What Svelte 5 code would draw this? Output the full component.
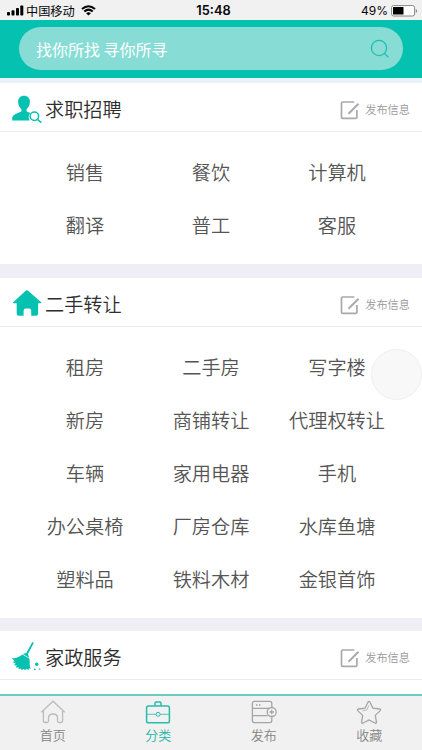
<script>
  let keyword = '';
  let activeTab = 'category';

  const sections = [
    {
      icon: 'person',
      title: '求职招聘',
      items: ['销售', '餐饮', '计算机', '翻译', '普工', '客服']
    },
    {
      icon: 'house',
      title: '二手转让',
      items: [
        '租房', '二手房', '写字楼',
        '新房', '商铺转让', '代理权转让',
        '车辆', '家用电器', '手机',
        '办公桌椅', '厂房仓库', '水库鱼塘',
        '塑料品', '铁料木材', '金银首饰'
      ]
    },
    { icon: 'broom', title: '家政服务', items: [] }
  ];

  const tabs = [
    { id: 'home', label: '首页' },
    { id: 'category', label: '分类' },
    { id: 'publish', label: '发布' },
    { id: 'favorite', label: '收藏' }
  ];
</script>

<div class="screen">
  <div class="status">
    <div class="carrier">
      <svg class="signal" width="17" height="11" viewBox="0 0 17 11">
        <rect x="0" y="7" width="3" height="3.5" rx="0.8" />
        <rect x="4.5" y="5.2" width="3" height="5.3" rx="0.8" />
        <rect x="9" y="3" width="3" height="7.5" rx="0.8" />
        <rect x="13.3" y="0.5" width="3" height="10" rx="0.8" />
      </svg>
      <span>中国移动</span>
      <svg class="wifi" width="15" height="11" viewBox="0 0 15 11">
        <path d="M1 4.1Q7.5 -1.7 14 4.1" />
        <path d="M3.3 6.5Q7.5 2.8 11.7 6.5" />
        <path class="dot" d="M5.1 8.2Q7.5 6.3 9.9 8.2L7.5 10.6z" />
      </svg>
    </div>
    <span class="time">15:48</span>
    <div class="power">
      <span>49%</span>
      <svg width="27" height="12" viewBox="0 0 27 12">
        <rect x="0.6" y="0.6" width="23" height="10.4" rx="2" fill="#fff" stroke="#858585" />
        <rect x="2" y="2" width="10.5" height="7.6" rx="0.6" />
        <path d="M24.8 4v4q1.3-.6 1.3-2t-1.3-2z" fill="#858585" />
      </svg>
    </div>
  </div>

  <header>
    <label class="search">
      <input type="text" placeholder="找你所找 寻你所寻" bind:value={keyword} />
      <svg width="20" height="20" viewBox="0 0 20 20" fill="none" stroke="#1fbfae" stroke-width="1.3">
        <circle cx="9" cy="9" r="7.6" />
        <path d="M14.2 14.2L18.6 18.4" />
      </svg>
    </label>
  </header>

  <main>
    {#each sections as section}
      <section>
        <div class="section-head">
          <svg class="section-icon" width="32" height="32" viewBox="0 0 32 32">
            {#if section.icon === 'person'}
              <path d="M13 2.8C9.2 2.8 7.1 5.3 7.1 8.700c0 3.400 1.300 5.800 3.300 7.300v2.500c-2.800 1.600-8.400 2.500-9.200 6.200v2.900h17.400c-1.500-2.700-1.100-5.700.8-7.500l-3.800-1.700v-2.400c2-1.500 3.300-3.900 3.300-7.300 0-3.400-2.100-5.900-5.900-5.900z" />
              <circle cx="23.400" cy="23.300" r="4.200" class="line" />
              <path d="M26.400 26.400L30.400 29.600" class="line" />
            {:else if section.icon === 'house'}
              <path d="M15.9 2.3q.6 0 1.2.5L30.200 14.200q.7 1-.6 1.100h-2.500v10.500q0 2-2 2h-4.900v-5q0-2.400-2-2.400h-3.600q-2 0-2 2.400v5H7.700q-2 0-2-2V15.300H3q-1.800 0-.8-1.100L14.700 2.800q.6-.5 1.200-.5z" />
            {:else}
              <path d="M20.900 1.700c.8-1 2.200-.3 1.600.9l-5.500 10.300 1.200 3.800-6.400-3.600 3.500-1.200z" />
              <path d="M11.300 13.600l7 3.900c1 3.100-.4 6.600 1.500 10.300l-2-.5.100 1.800-2.500-1-1.300 1-1.600-1-1.800 1.200-.8-1.700-2.500.7.500-1.900-3.200.2 1.200-2-3.100-.3 2-1.700-3.500-1.600 2.500-.7-3.200-3.400c4.700 1.200 7.300-.8 10.700-3.300z" />
              <circle cx="25.700" cy="23.200" r="1.700" />
              <circle cx="23.800" cy="28.300" r=".9" />
              <circle cx="28.700" cy="28.300" r=".7" />
            {/if}
          </svg>
          <h2>{section.title}</h2>
          <button class="post">
            <svg width="20" height="20" viewBox="0 0 20 20" fill="none" stroke="#a9a9a9" stroke-width="1.7">
              <path d="M14.300 2H2.700Q1.500 2 1.500 3.200v14Q1.500 18.400 2.700 18.400h13Q16.900 18.400 16.900 17.200V10" />
              <path d="M8.500 13.800L18.500 3.800" stroke-width="2" />
            </svg>
            <span>发布信息</span>
          </button>
        </div>
        {#if section.items.length > 0}
          <div class="grid">
            {#each section.items as item}
              <span>{item}</span>
            {/each}
          </div>
        {/if}
      </section>
    {/each}
  </main>

  <nav>
    {#each tabs as tab}
      <button class="tab" class:active={activeTab === tab.id} on:click={() => (activeTab = tab.id)}>
        <svg width="26" height="24" viewBox="0 0 26 24">
          {#if tab.id === 'home'}
            <path d="M1.300 12.300L13 1.200l11.700 11.100M3.400 11v9.500Q3.400 22.500 5.200 22.500h1.800Q8.500 22.500 8.500 21V18q0-4 4.500-4t4.500 4v3q0 1.500 1.500 1.500h1.800q1.800 0 1.800-2V11" stroke="#bcbcbc" />
          {:else if tab.id === 'category'}
            <rect x="1.600" y="6" width="22.800" height="16.700" rx="1.800" />
            <path d="M10 5.800V3.200Q10 2 11.200 2h3.600Q16 2 16 3.200v2.600" />
            <path d="M2 14.300h9M15.200 14.300H24" stroke-width=".8" />
            <circle cx="13.100" cy="14.300" r="2" stroke-width="1" />
          {:else if tab.id === 'publish'}
            <path d="M20.800 7.500V3.400Q20.800 1.400 18.800 1.400H3.400Q1.400 1.400 1.400 3.400v17.200q0 2 2 2h15.400q2 0 2-2v-3.400M1.400 8.300h17M1.400 15.600h15.200" />
            <circle cx="20.700" cy="12" r="4.500" />
            <path d="M18.400 12h4.600M20.700 9.700v4.600M5 5h1.500M8 5h1.500" />
          {:else}
            <path d="M12 2.200q1-1.700 2 0l2.900 5.900 6.500.9q2 .4.600 1.900l-4.700 4.500 1.100 6.500q.2 1.900-1.500 1.100L13 20l-5.900 3q-1.700.8-1.500-1.100l1.100-6.500L2 10.900Q.6 9.400 2.600 9l6.500-.9z" />
            <path d="M13 5.200l-2 4.600-4.500 1" stroke-width=".7" />
          {/if}
        </svg>
        <span>{tab.label}</span>
      </button>
    {/each}
  </nav>

  <div class="assistive"></div>
</div>

<style>
:global(body) {
  margin: 0;
  overflow: hidden;
}
.screen {
  position: relative;
  display: flex;
  flex-direction: column;
  width: 422px;
  height: 750px;
  overflow: hidden;
  background: #efeef4;
  font-family: "Noto Sans CJK SC", sans-serif;
  font-weight: 350;
}
button {
  padding: 0;
  border: none;
  background: none;
  font-family: inherit;
  font-weight: inherit;
}
.status {
  flex: none;
  display: grid;
  grid-template-columns: 1fr auto 1fr;
  align-items: center;
  height: 20px;
  padding: 0 4px 0 7px;
  background: #f1f1f1;
  color: #050505;
  font-size: 12.2px;
  font-weight: 400;
  line-height: 20px;
}
.carrier {
  display: flex;
  align-items: center;
}
.carrier span {
  margin: 0 6px 0 2px;
}
.wifi path {
  fill: none;
  stroke: #050505;
  stroke-width: 2;
}
.wifi .dot {
  fill: #050505;
  stroke: none;
}
.time {
  font: 600 12.8px/20px Inter, sans-serif;
  padding: 1px 0 0 2px;
}
.power {
  display: flex;
  justify-content: flex-end;
  align-items: center;
  gap: 3px;
  font: 12px/20px Inter, sans-serif;
}
.power span {
  padding-top: 1px;
}
header {
  flex: none;
  height: 58px;
  padding: 7px 19px 8px;
  background: #04c1b0;
  box-sizing: border-box;
}
.search {
  display: flex;
  align-items: center;
  height: 43px;
  padding: 0 13px 0 17px;
  border-radius: 22px;
  background: #87ddd5;
  box-sizing: border-box;
}
.search svg {
  margin-top: 1px;
}
input {
  flex: 1;
  min-width: 0;
  padding: 0;
  border: none;
  outline: none;
  background: none;
  color: #fff;
  font: 400 16px/24px "Noto Sans CJK SC", sans-serif;
}
input::placeholder {
  color: #fff;
  opacity: 1;
}
main {
  flex: 1;
  min-height: 0;
  display: flex;
  flex-direction: column;
  gap: 13.5px;
  padding-top: 5px;
  overflow: hidden;
  background: linear-gradient(#e9f2f6 5px, #efeef4 5px);
}
section {
  flex: none;
  background: #fff;
}
section:last-child {
  flex: 1;
}
.section-head {
  display: flex;
  align-items: center;
  height: 49px;
  padding: 0 12px 0 11px;
  border-bottom: 1px solid #ececec;
  box-sizing: border-box;
}
.section-icon {
  margin-top: 4px;
  fill: #04c1b0;
}
.section-icon .line {
  fill: none;
  stroke: #04c1b0;
  stroke-width: 1.5;
}
h2 {
  flex: 1;
  margin: 4px 0 0 2px;
  color: #2e2e2e;
  font-size: 19.2px;
  font-weight: inherit;
  line-height: 28px;
}
.post {
  display: flex;
  align-items: center;
  gap: 5px;
  margin-top: 4px;
  color: #999;
  font-size: 11.2px;
  line-height: 16px;
}
.post svg {
  margin-top: 2px;
}
.grid {
  display: grid;
  grid-template-columns: repeat(3, 126px);
  grid-auto-rows: 53px;
  justify-content: center;
  padding: 14px 0 12px;
}
.grid span {
  color: #555;
  font-size: 19.2px;
  line-height: 53px;
  text-align: center;
}
nav {
  flex: none;
  display: grid;
  grid-template-columns: repeat(4, 1fr);
  height: 56px;
  border-top: 2px solid #6fc9c4;
  background: #f1f1f1;
  box-sizing: border-box;
}
.tab {
  display: flex;
  flex-direction: column;
  align-items: center;
  padding-top: 4px;
  color: #858585;
  font-size: 13px;
  line-height: 20px;
}
.tab span {
  margin-top: 1px;
}
.tab svg {
  fill: none;
  stroke: #a5a5a5;
  stroke-width: 1.3;
}
.tab.active {
  color: #1cb5a6;
}
.tab.active svg {
  stroke: #27bbac;
  stroke-width: 1.5;
}
.assistive {
  position: absolute;
  top: 349px;
  left: 371px;
  width: 51px;
  height: 51px;
  border: 1px solid #efefef;
  border-radius: 50%;
  background: #f8f8f8;
  box-sizing: border-box;
}
</style>
